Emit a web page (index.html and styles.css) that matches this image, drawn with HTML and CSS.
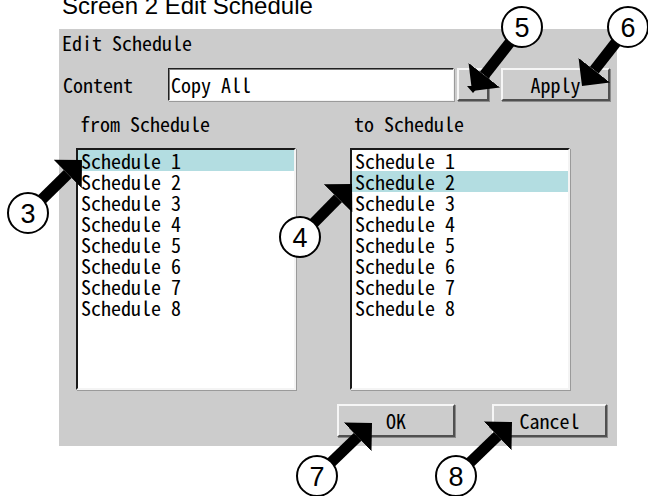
FILE: index.html
```html
<!DOCTYPE html>
<html lang="en">
<head>
    <meta charset="UTF-8">
    <meta name="viewport" content="width=device-width, initial-scale=1.0">
    <title>Screen 2 Edit Schedule</title>
    <link rel="stylesheet" href="styles.css">
</head>
<body>
    <p class="caption">Screen 2 Edit Schedule</p>

    <div class="dialog">
        <div class="dlg-title">Edit Schedule</div>

        <div class="content-row">
            <span class="content-label">Content</span>
            <div class="combo-text">Copy All</div>
            <div class="btn combo-btn"><span class="tri"></span></div>
            <div class="btn apply-btn">Apply</div>
        </div>

        <div class="lists">
            <div class="list-col">
                <div class="list-label">from Schedule</div>
                <ul class="listbox">
                    <li class="sel">Schedule 1</li>
                    <li>Schedule 2</li>
                    <li>Schedule 3</li>
                    <li>Schedule 4</li>
                    <li>Schedule 5</li>
                    <li>Schedule 6</li>
                    <li>Schedule 7</li>
                    <li>Schedule 8</li>
                </ul>
            </div>
            <div class="list-col">
                <div class="list-label">to Schedule</div>
                <ul class="listbox">
                    <li>Schedule 1</li>
                    <li class="sel">Schedule 2</li>
                    <li>Schedule 3</li>
                    <li>Schedule 4</li>
                    <li>Schedule 5</li>
                    <li>Schedule 6</li>
                    <li>Schedule 7</li>
                    <li>Schedule 8</li>
                </ul>
            </div>
        </div>

        <div class="actions">
            <div class="btn ok-btn">OK</div>
            <div class="btn cancel-btn">Cancel</div>
        </div>
    </div>

    <!-- numbered callouts drawn over the dialog -->
    <svg class="callouts" width="648" height="496" viewBox="0 0 648 496">
        <defs>
            <marker id="head" markerUnits="userSpaceOnUse" viewBox="0 0 20 40"
                    markerWidth="20" markerHeight="40" refX="0" refY="20" orient="auto">
                <path d="M0,0 L20,20 L0,40 z" fill="#000"/>
            </marker>
        </defs>
        <g class="arrows">
            <line x1="28" y1="213" x2="67.7" y2="174"/>
            <line x1="300" y1="237" x2="338" y2="198.3"/>
            <line x1="522" y1="27" x2="484.3" y2="75.2"/>
            <line x1="628" y1="27" x2="594.3" y2="70.2"/>
            <line x1="317" y1="476" x2="357.6" y2="436.9"/>
            <line x1="456" y1="476" x2="497.6" y2="435.9"/>
        </g>
        <g class="badge"><circle cx="28" cy="213" r="20"/><text x="28" y="223">3</text></g>
        <g class="badge"><circle cx="300" cy="237" r="20"/><text x="300" y="247">4</text></g>
        <g class="badge"><circle cx="522" cy="27" r="20"/><text x="522" y="37">5</text></g>
        <g class="badge"><circle cx="628" cy="27" r="20"/><text x="628" y="37">6</text></g>
        <g class="badge"><circle cx="317" cy="476" r="20"/><text x="317" y="486">7</text></g>
        <g class="badge"><circle cx="456" cy="476" r="20"/><text x="456" y="486">8</text></g>
    </svg>
</body>
</html>
```

FILE: styles.css
```css
body {
    margin: 0;
    padding: 0;
    background-color: #fff;
    color: #000;
}

.caption {
    margin: 0 0 0 62px;
    font-family: "Liberation Sans", Arial, sans-serif;
    font-size: 24px;
    line-height: 11px;
    height: 11px;
}

.dialog {
    margin: 18px 0 0 59px;
    width: 558px;
    height: 417px;
    box-sizing: border-box;
    background-color: #cccccc;
    font-family: "Noto Sans Mono CJK JP", "DejaVu Sans Mono", monospace;
    font-size: 20px;
    line-height: 20px;
}

.dlg-title {
    padding: 4px 0 0 3px;
}

.content-row {
    display: flex;
    align-items: center;
    margin-top: 15px;
    padding-left: 4px;
    height: 33px;
}

.content-label {
    width: 105px;
}

.combo-text {
    width: 286px;
    height: 33px;
    box-sizing: border-box;
    padding: 6px 0 0 2px;
    background-color: #fff;
    border: 1px solid;
    border-color: #202020 #f4f4f4 #f4f4f4 #202020;
    box-shadow: 1px 1px 0 #9a9a9a, inset 1px 1px 0 #808080;
}

.btn {
    box-sizing: border-box;
    height: 33px;
    display: flex;
    align-items: center;
    justify-content: center;
    background-color: #cccccc;
    border: 2px solid;
    border-color: #f6f6f6 #505050 #505050 #f6f6f6;
    box-shadow: 1px 1px 0 #8a8a8a;
}

.combo-btn {
    width: 32px;
    margin-left: 3px;
}

.tri {
    width: 0;
    height: 0;
    border-left: 6px solid transparent;
    border-right: 6px solid transparent;
    border-top: 7px solid #000;
    margin-top: 10px;
}

.apply-btn {
    width: 109px;
    margin-left: 12px;
}

.lists {
    display: flex;
    gap: 54px;
    margin-top: 13px;
    padding-left: 17px;
}

.list-label {
    padding-left: 4px;
    margin-bottom: 14px;
}

.listbox {
    list-style-type: none;
    margin: 0;
    padding: 0;
    width: 220px;
    height: 242px;
    box-sizing: border-box;
    background-color: #fff;
    border: 2px solid;
    border-color: #1a1a1a #f4f4f4 #f4f4f4 #1a1a1a;
    box-shadow: 1px 1px 0 #9a9a9a;
}

.listbox li {
    height: 21px;
    line-height: 21px;
    padding-left: 3px;
}

.listbox li.sel {
    background-color: #b3dde1;
}

.actions {
    display: flex;
    justify-content: flex-end;
    gap: 37px;
    margin-top: 14px;
    padding-right: 10px;
}

.ok-btn {
    width: 118px;
}

.cancel-btn {
    width: 115px;
}

.callouts {
    position: absolute;
    top: 0;
    left: 0;
    pointer-events: none;
}

.arrows line {
    stroke: #000;
    stroke-width: 11;
    marker-end: url(#head);
}

.badge circle {
    fill: #fff;
    stroke: #000;
    stroke-width: 2;
}

.badge text {
    font-family: "Liberation Sans", Arial, sans-serif;
    font-size: 27px;
    text-anchor: middle;
    fill: #000;
}
```
